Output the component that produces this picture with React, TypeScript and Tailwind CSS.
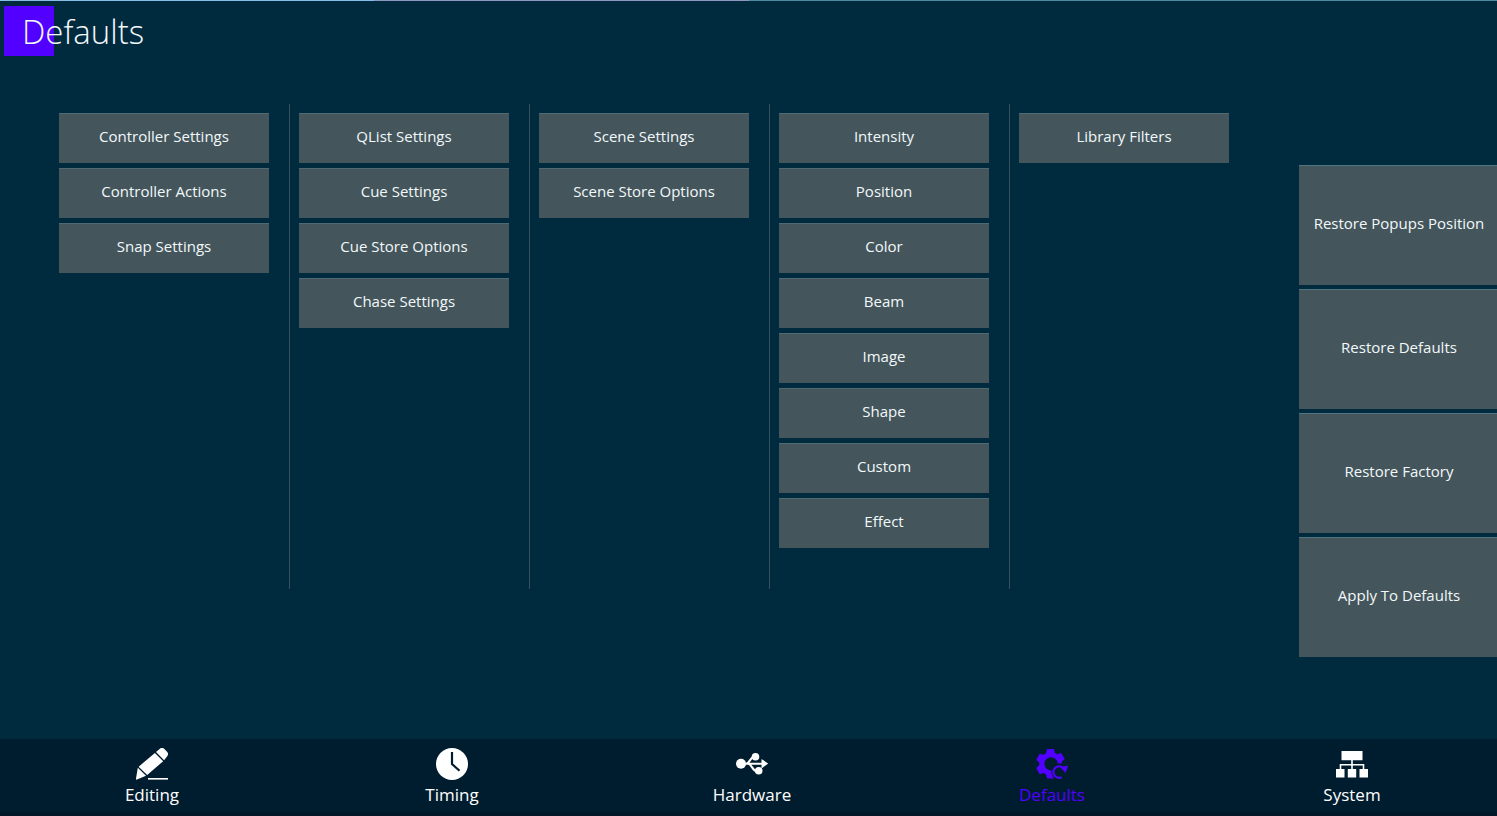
import type { ReactNode } from "react";

const columns: string[][] = [
  ["Controller Settings", "Controller Actions", "Snap Settings"],
  ["QList Settings", "Cue Settings", "Cue Store Options", "Chase Settings"],
  ["Scene Settings", "Scene Store Options"],
  ["Intensity", "Position", "Color", "Beam", "Image", "Shape", "Custom", "Effect"],
  ["Library Filters"],
];

const actions = ["Restore Popups Position", "Restore Defaults", "Restore Factory", "Apply To Defaults"];

function Icon({ children }: { children: ReactNode }) {
  return (
    <svg viewBox="0 0 32 32" className="h-8 w-8 fill-current" aria-hidden="true">
      {children}
    </svg>
  );
}

const tabs: { label: string; icon: ReactNode }[] = [
  {
    label: "Editing",
    icon: (
      <Icon>
        <path d="M20 4.1 23.6 1a3.6 3.6 0 0 1 4.8 0l2.4 2.5a3.6 3.6 0 0 1 .2 4.9l-2.9 3.8Z" />
        <path d="M18.9 5 27.2 13.2 11.2 27 2.6 18.7Z" />
        <path d="M1.8 19.7 10 27.8 1 31.6Q-.3 31.9 0 30.6Z" />
        <path d="M12 30h20v1.6H12Z" />
      </Icon>
    ),
  },
  {
    label: "Timing",
    icon: (
      <Icon>
        <circle cx="16" cy="16" r="16" />
        <path d="M16 4v12l7.5 6.8" fill="none" stroke="#001d2f" strokeWidth="2.2" />
      </Icon>
    ),
  },
  {
    label: "Hardware",
    icon: (
      <Icon>
        <circle cx="5" cy="15.7" r="5" />
        <path
          d="M9 15.7h17M10 15.7c4 0 4-7.2 9-7.2M12 15.7c4 0 4 7.5 9 7.5"
          fill="none"
          stroke="currentColor"
          strokeWidth="2"
        />
        <circle cx="19.5" cy="8.8" r="3.8" />
        <circle cx="22.7" cy="22.8" r="3.8" />
        <path d="M25.5 11 32.2 15.7 25.5 20.4Z" />
      </Icon>
    ),
  },
  {
    label: "Defaults",
    icon: (
      <Icon>
        <path
          fillRule="evenodd"
          d="M11 1h7l1 4 2.2 1.2 4-1.2 3.5 6-2.9 2.8v1.6h-4.2a6.6 6.6 0 1 0-6 7c-.4 3 .6 6 2.4 8.2H11l-1-4.2-2.3-1.3-4 1.2L.2 20l3-2.9v-2.6l-3-2.8 3.5-6 4 1.1L10 5.2Z"
        />
        <path d="M25.6 29.2a5.7 5.7 0 1 1 2.2-8.4" fill="none" stroke="currentColor" strokeWidth="2.2" />
        <path d="M23.8 18.8 32.2 17.8 29.6 25Z" />
      </Icon>
    ),
  },
  {
    label: "System",
    icon: (
      <Icon>
        <path d="M5.5 3h21v9.2h-21ZM0 21h8.5v8.5H0ZM11.8 21h8.4v8.5h-8.4ZM23.5 21H32v8.5h-8.5Z" />
        <path d="M16 11v11M4.5 22v-5.2h23V22" fill="none" stroke="currentColor" strokeWidth="1.6" />
      </Icon>
    ),
  },
];

export default function App() {
  return (
    <div className="flex min-h-screen flex-col overflow-x-hidden bg-[#002b3f] font-['Open_Sans','Noto_Sans',sans-serif] text-[#f3f8fa]">
      <div className="flex h-px">
        <div className="w-1/4 bg-[#86bce8]" />
        <div className="w-1/4 bg-[#8f96c0]" />
        <div className="w-1/2 bg-[#4d8ba0]" />
      </div>
      <header className="px-1 pt-[5px]">
        <div className="h-[50px] w-[50px] bg-[#5200ff] pl-[18px]">
          <h1 className="text-[33px] leading-[52px] font-light">Defaults</h1>
        </div>
      </header>

      <main className="flex grow items-start justify-between pt-12 pl-[50px]">
        <div className="flex min-h-[485px]">
          {columns.map((items, i) => (
            <section
              key={items[0]}
              className={`flex w-60 flex-col gap-[5px] border-r pt-[9px] pr-5 pl-[9px] ${
                i < columns.length - 1 ? "border-[#35515e]" : "border-transparent"
              }`}
            >
              {items.map((label) => (
                <button
                  key={label}
                  type="button"
                  className="h-[50px] border-t border-[#4f6a73] bg-[#44565c] pb-1.5 text-[15px] leading-5"
                >
                  {label}
                </button>
              ))}
            </section>
          ))}
        </div>

        <aside className="-mr-0.5 mt-[61px] flex w-[200px] shrink-0 flex-col gap-1">
          {actions.map((label) => (
            <button
              key={label}
              type="button"
              className="h-[120px] border-t border-[#4f7583] bg-[#44565c] pb-1.5 text-[15px] leading-5 whitespace-nowrap"
            >
              {label}
            </button>
          ))}
        </aside>
      </main>

      <nav className="border-b-4 border-[#001828] bg-[#001d2f]">
        <div className="-mr-[5px] grid grid-cols-5 pl-0.5">
          {tabs.map(({ label, icon }) => (
            <button
              key={label}
              type="button"
              className={`flex h-[73px] flex-col items-center gap-[3px] pt-[9px] text-[17px] leading-6 ${
                label === "Defaults" ? "text-[#5200ff]" : "text-white"
              }`}
            >
              {icon}
              {label}
            </button>
          ))}
        </div>
      </nav>
    </div>
  );
}
